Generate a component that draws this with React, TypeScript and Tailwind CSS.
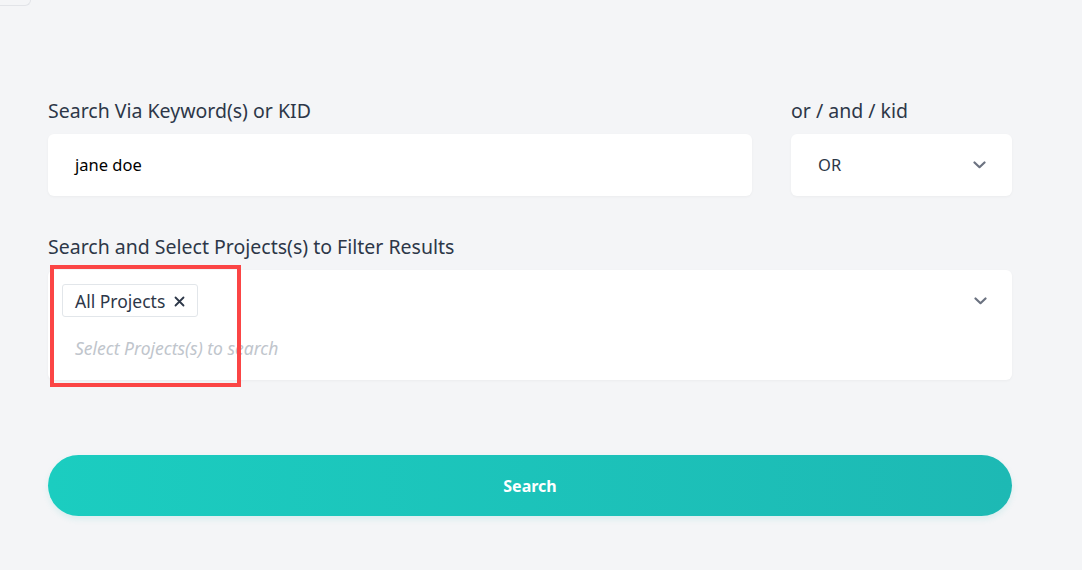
import React from "react";

function Chevron({ className = "" }: { className?: string }) {
  return (
    <svg width="13" height="8" viewBox="0 0 13 8" className={className} fill="none">
      <path d="M1.5 1.5 L6.5 6.2 L11.5 1.5" stroke="#6b7280" strokeWidth="2.2" strokeLinecap="round" strokeLinejoin="round" />
    </svg>
  );
}

export default function App() {
  return (
    <div
      className="relative min-h-[570px] w-full bg-[#f4f5f7] text-[#2d3748]"
      style={{ fontFamily: '"Noto Sans", "Open Sans", sans-serif' }}
    >
      <div className="absolute left-0 top-0 h-[6px] w-[31px] rounded-br-[6px] border-b border-r border-[#e2e4e8] bg-[#f4f5f7]" />
      <div className="pl-[48px] pr-[70px] pt-[97px]">
        <div className="grid grid-cols-[704px_1fr] gap-x-[39px]">
          <div>
            <div className="mb-[10px] text-[19.5px] leading-[27px] text-[#2d3748]">Search Via Keyword(s) or KID</div>
            <div className="flex h-[62px] items-center rounded-[6px] bg-white px-[27px] text-[16.5px] text-black shadow-[0_1px_3px_rgba(0,0,0,0.04)]">
              jane doe
            </div>
          </div>
          <div>
            <div className="mb-[10px] text-[19.5px] leading-[27px] text-[#2d3748]">or / and / kid</div>
            <div className="flex h-[62px] items-center justify-between rounded-[6px] bg-white pl-[27px] pr-[26px] text-[16.5px] text-[#2d3748] shadow-[0_1px_3px_rgba(0,0,0,0.04)]">
              <span>OR</span>
              <Chevron />
            </div>
          </div>
        </div>

        <div className="mt-[37px]">
          <div className="mb-[10px] text-[19.5px] leading-[27px] text-[#2d3748]">Search and Select Projects(s) to Filter Results</div>
          <div className="relative flex h-[110px] justify-between rounded-[6px] bg-white pl-[14px] pr-[25px] pt-[14px] shadow-[0_1px_3px_rgba(0,0,0,0.04)]">
            <div className="flex flex-col items-start">
              <div className="flex h-[33px] items-center gap-[9px] rounded-[3px] border border-[#e2e6ea] bg-white pl-[12px] pr-[12px] pt-[1px] text-[17.5px] text-[#2d3748]">
                <span>All Projects</span>
                <svg width="11" height="11" viewBox="0 0 11 11" fill="none">
                  <path d="M1.5 1.5 L9.5 9.5 M9.5 1.5 L1.5 9.5" stroke="#2d3748" strokeWidth="1.8" strokeLinecap="round" />
                </svg>
              </div>
              <div className="mt-[18px] pl-[13px] text-[17.5px] italic text-[#c0c5cc]">Select Projects(s) to search</div>
            </div>
            <div className="pt-[13px]">
              <Chevron />
            </div>
            <div className="pointer-events-none absolute left-[2px] top-[-5px] h-[122px] w-[191px] border-[4px] border-[#fb4545]" />
          </div>
        </div>

        <button className="mt-[75px] flex h-[61px] w-full items-center justify-center rounded-full bg-gradient-to-r from-[#1bcdc0] to-[#1db9b4] text-[16px] font-bold text-white shadow-[0_3px_6px_rgba(28,190,180,0.12)]">
          Search
        </button>
      </div>
    </div>
  );
}
